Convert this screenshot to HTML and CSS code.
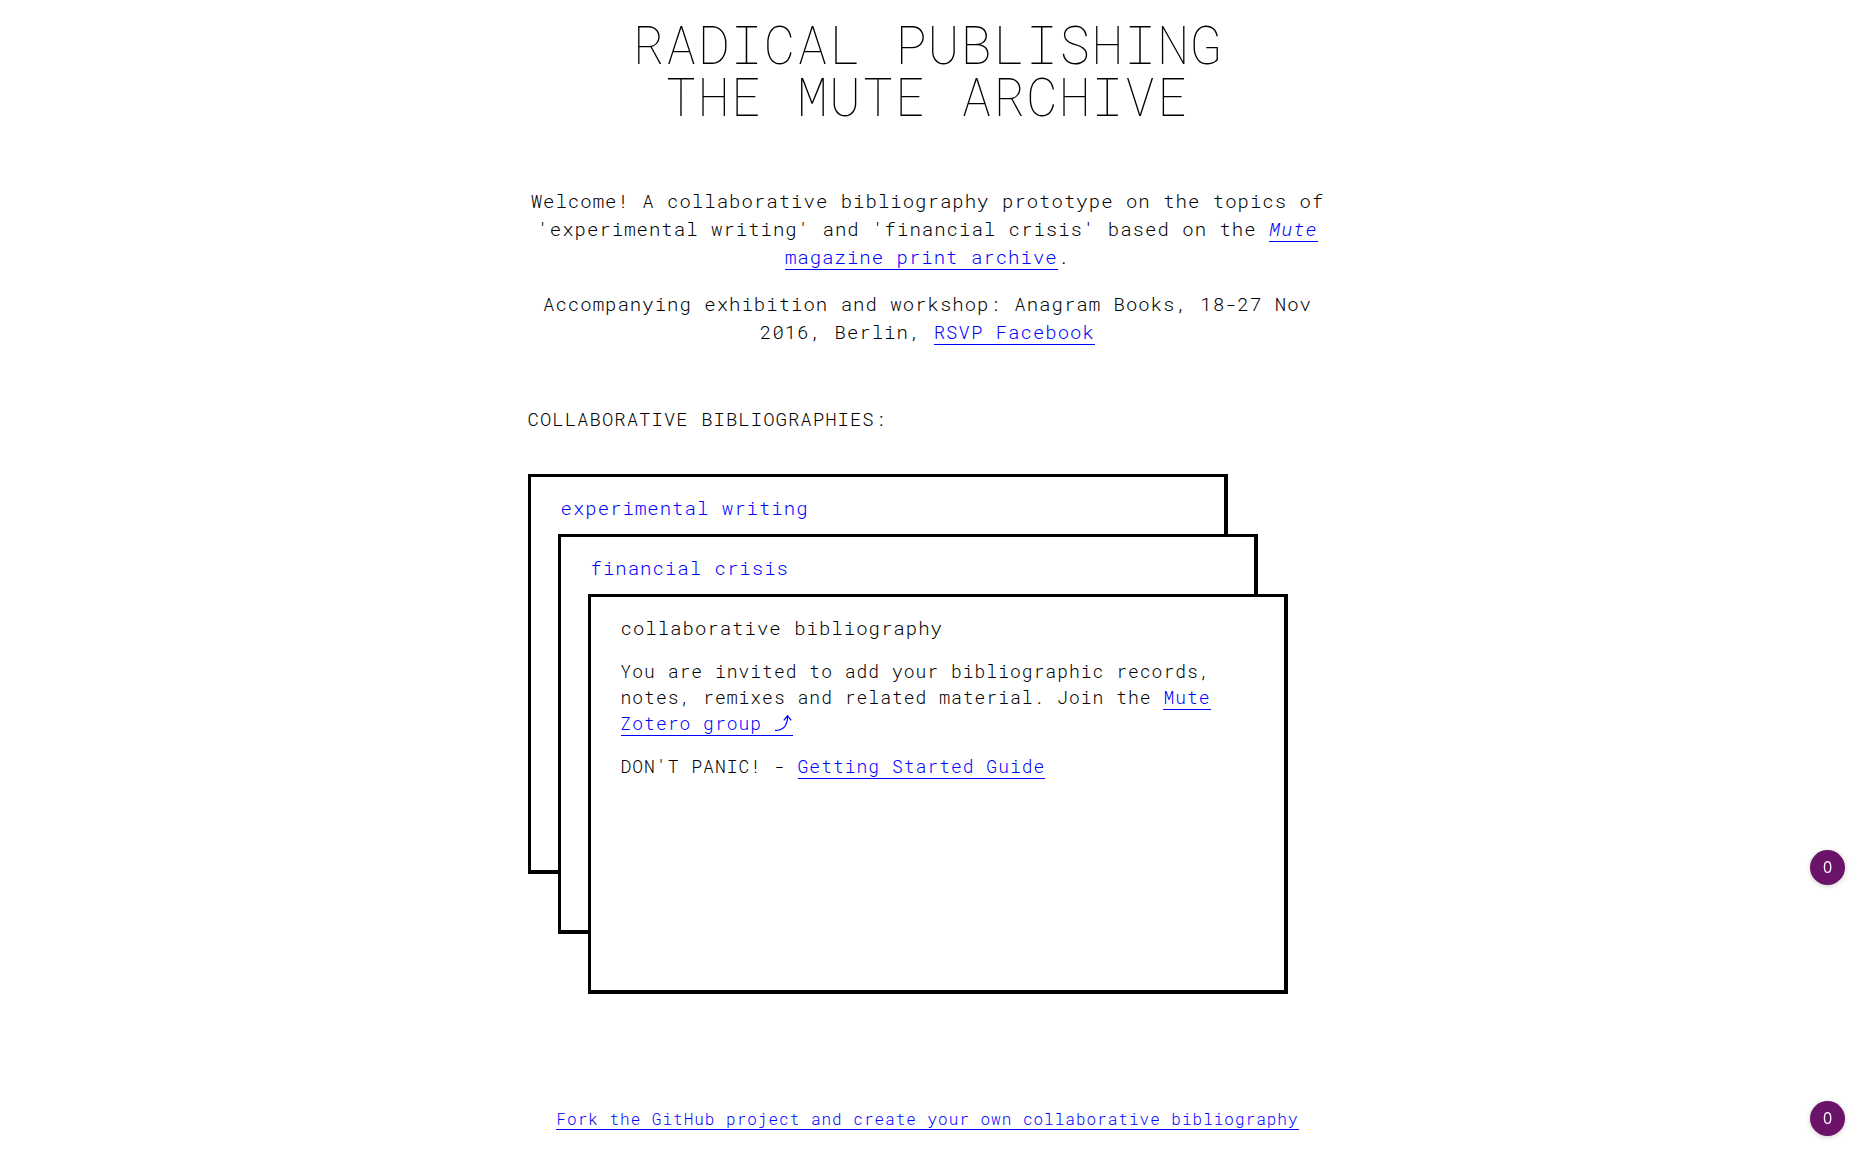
FILE: index.html
```html
<!DOCTYPE html>
<html lang="en">
<head>
<meta charset="utf-8">
<meta name="viewport" content="width=device-width, initial-scale=1">
<title>Radical Publishing: The Mute Archive</title>
<link rel="stylesheet" href="styles.css">
</head>
<body>
<main class="page">
  <h1 class="title">RADICAL PUBLISHING<br>THE MUTE ARCHIVE</h1>
  <section class="intro">
    <p>Welcome! A collaborative bibliography prototype on the topics of 'experimental writing' and 'financial crisis' based on the <a href="#archive"><em>Mute</em> magazine print archive</a>.</p>
    <p>Accompanying exhibition and workshop: Anagram Books, 18-27 Nov 2016, Berlin, <a href="#rsvp">RSVP Facebook</a></p>
  </section>
  <h2 class="subtitle">COLLABORATIVE BIBLIOGRAPHIES:</h2>
  <div class="stack">
    <section class="panel">
      <h3><a class="plain" href="#writing">experimental writing</a></h3>
    </section>
    <section class="panel">
      <h3><a class="plain" href="#crisis">financial crisis</a></h3>
    </section>
    <section class="panel">
      <h3>collaborative bibliography</h3>
      <p>You are invited to add your bibliographic records, notes, remixes and related material. Join the <a href="#zotero">Mute Zotero group <svg class="arrow" viewBox="0 0 19 18" aria-hidden="true"><path d="M1 16.300C9 16.500 13.500 12 13.500 2.500M9.800 6.300 13.500 1.800l3.700 4.500"/></svg></a></p>
      <p>DON'T PANIC! - <a href="#guide">Getting Started Guide</a></p>
    </section>
  </div>
  <footer class="footer"><a href="#fork">Fork the GitHub project and create your own collaborative bibliography</a></footer>
</main>
<aside class="counters">
  <button class="counter" type="button">0</button>
  <button class="counter" type="button">0</button>
</aside>
</body>
</html>
```
FILE: styles.css
```css
* { box-sizing: border-box; }

body {
  margin: 0;
  background: #fff;
  color: #000;
  font-family: "Roboto Mono", "Liberation Mono", monospace;
  font-size: 19px;
  font-weight: 300;
  line-height: 28px;
  letter-spacing: 1px;
}

h1, h2, h3, p { margin: 0; font-weight: inherit; }

a {
  color: #00f;
  text-decoration: none;
  border-bottom: 1px solid #00f;
}

a.plain { border-bottom: 0; }

.page {
  max-width: 800px;
  margin: 0 auto;
  padding: 17px 0 32px;
}

.title {
  font-size: 53px;
  font-weight: 100;
  line-height: 52px;
  text-align: center;
}

.intro {
  display: flex;
  flex-direction: column;
  gap: 19px;
  margin-top: 66px;
  text-align: center;
}

.subtitle { margin-top: 59px; font-size: 19px; }

.stack {
  display: flex;
  flex-direction: column;
  margin-top: 41px;
}

.panel {
  width: 700px;
  max-width: calc(100% - 60px);
  min-height: 400px;
  padding: 17px 60px 30px 30px;
  border: 3px solid #000;
  border-right-width: 4px;
  border-bottom-width: 4px;
  background: #fff;
  font-size: 18px;
  line-height: 26px;
}

.panel + .panel { margin-top: -340px; margin-left: 30px; }
.panel + .panel + .panel { margin-left: 60px; }
.panel h3 { font-size: 19px; line-height: 28px; }
.panel p { margin-top: 17px; }
.panel h3 + p { margin-top: 16px; }

.arrow {
  width: 19px;
  height: 18px;
  vertical-align: -2px;
  fill: none;
  stroke: currentColor;
  stroke-width: 1.2;
}

.footer {
  margin-top: 111px;
  font-size: 16px;
  text-align: center;
}

.counters {
  position: fixed;
  right: 10px;
  bottom: 32px;
  display: flex;
  flex-direction: column;
  gap: 216px;
}

.counter {
  width: 35px;
  height: 35px;
  padding: 0;
  border: 0;
  border-radius: 50%;
  background: #6a1369;
  color: #fff;
  box-shadow: 0 1px 5px rgba(0, 0, 0, 0.2);
  font: 400 16px/35px "Open Sans", sans-serif;
}
```
